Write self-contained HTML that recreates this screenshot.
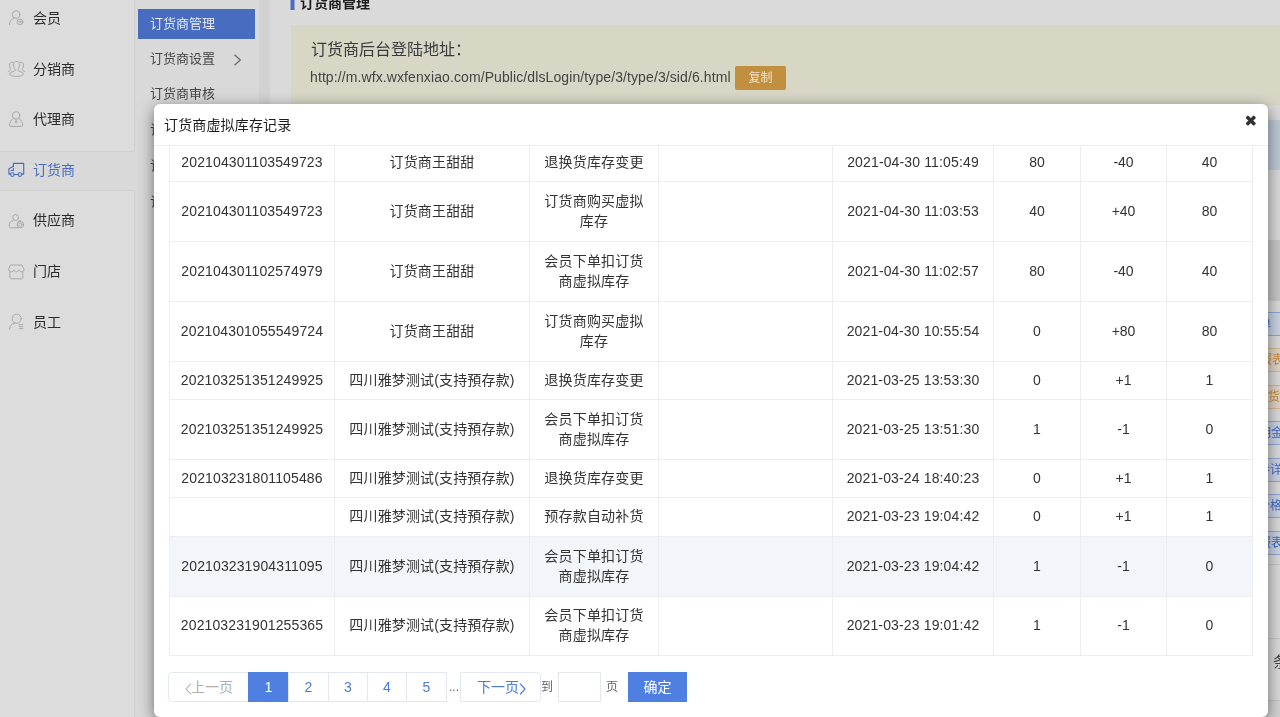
<!DOCTYPE html>
<html lang="zh-CN">
<head>
<meta charset="utf-8">
<title>订货商管理</title>
<style>
*{box-sizing:border-box;margin:0;padding:0}
html,body{width:1280px;height:717px;overflow:hidden}
body{position:relative;opacity:.999;background:#d9d9d9;font-family:"Liberation Sans","Noto Sans CJK SC",sans-serif;font-size:14px;color:#333}
.abs{position:absolute}
/* ---------- left sidebar ---------- */
#side1{left:0;top:0;width:134px;height:717px;background:#d9d9d9}
#side1 .blk{position:absolute;left:0;width:135px;background:#dcdcdc;border-right:1px solid #cfcfcf}
#side1 .b1{top:0;height:152px;border-bottom:1px solid #cfcfcf}
#side1 .b2{top:190px;height:527px;border-top:1px solid #cfcfcf}
#side1 .it{position:absolute;left:33px;font-size:14px;line-height:20px;color:#2b2b2b;white-space:nowrap}
#side1 .it.on{color:#476cc0}
#side1 svg{position:absolute;left:6px;overflow:visible}
/* ---------- second sidebar ---------- */
#side2{left:135px;top:0;width:124px;height:717px;background:#d9d9d9}
#side2 .act{position:absolute;left:3px;top:9px;width:117px;height:30px;background:#476cc0;color:#e6e9f2;font-size:13px;line-height:30px;padding-left:12px}
#side2 .s{position:absolute;left:15px;font-size:13px;line-height:20px;color:#444;white-space:nowrap}
#gut{left:259px;top:0;width:11px;height:717px;background:#d2d2d2}
/* ---------- main ---------- */
#main{left:270px;top:0;width:1010px;height:717px;background:#dadada}
#hbar{left:290px;top:0;width:4.300px;height:9.700px;background:#476cc0;transform:translateX(.5px)}
#htxt{left:300px;top:-7px;font-size:14px;font-weight:bold;line-height:20px;color:#1e1e1e;white-space:nowrap}
#tip{left:291px;top:25px;width:989px;height:90px;background:#d8d6c5}
#tip .t1{position:absolute;left:20px;top:13px;font-size:16px;line-height:24px;color:#3a3a3a;white-space:nowrap}
#tip .t2{position:absolute;left:19px;top:42px;font-size:14px;line-height:20px;color:#444;white-space:nowrap;letter-spacing:.1px}
#tip .cp{position:absolute;left:444px;top:41px;width:51px;height:24px;background:#c28f3f;color:#efe4cf;font-size:12px;line-height:24px;text-align:center;border-radius:2px}
/* ---------- right strip ---------- */
.rb{position:absolute;left:-2px;width:60px;height:24px;line-height:22px;font-size:12px;text-align:left;white-space:nowrap;overflow:hidden;border:1px solid}
.rb.bl{color:#3f67c6;border-color:#8fa6d6;background:#c9d2e3}
.rb.or{color:#c98a3a;border-color:#d6b78f;background:#dcd3c5}
/* ---------- modal ---------- */
#modal{left:154px;top:104px;width:1114px;height:613px;background:#fff;border-radius:6px;box-shadow:0 4px 15px rgba(0,0,0,.5)}
#mtitle{left:10px;top:0;height:41px;line-height:42px;font-size:14px;color:#1c1c1c;white-space:nowrap;letter-spacing:.15px}
#mline{left:0;top:41px;width:1114px;height:1px;background:#ecedf0}
#mclose{left:1091px;top:11px;width:12px;height:12px;overflow:visible}
#tbwrap{left:15px;top:42px;width:1084px;height:512px;overflow:hidden}
table{border-collapse:separate;border-spacing:0;table-layout:fixed;width:1084px;border-left:1px solid #ecedf0;margin-top:-2px}
td{border-right:1px solid #ecedf0;border-bottom:1px solid #ecedf0;text-align:center;vertical-align:middle;font-size:14px;line-height:20px;color:#333;padding:0 0 2px}
td:nth-child(1){letter-spacing:.12px}
td:nth-child(2){letter-spacing:.15px}
td:nth-child(3){letter-spacing:.2px}
td:nth-child(5){letter-spacing:.14px}
tr.h38 td{height:38px}
tr.h60 td{height:60px}
tr.h39 td{height:39px}
tr.h59 td{height:59px}
tr.hl td{background:#f2f6fb}
/* ---------- pagination ---------- */
.pg{position:absolute;top:568px;height:30px;line-height:28px;font-size:14px;text-align:center;border:1px solid #e3e7f0;color:#4a7ad8;background:#fff;white-space:nowrap}
</style>
</head>
<body>

<div id="main" class="abs"></div>
<div id="gut" class="abs"></div>

<div id="side1" class="abs">
  <div class="blk b1"></div>
  <div class="blk b2"></div>

  <svg id="ic" class="abs" style="left:0;top:0" width="134" height="340" viewBox="0 0 134 340" fill="none" stroke="#a3a3a3" stroke-width="0.9" stroke-linecap="round" stroke-linejoin="round">
    <!-- member -->
    <circle cx="16.05" cy="14.6" r="3.75"/>
    <path d="M9.4 24.6C9.6 21.4 11.2 19.2 13.8 18.2"/>
    <circle cx="20" cy="21.9" r="2.85"/>
    <circle cx="20" cy="21.9" r="1" stroke-width="0.7"/>
    <!-- distributor -->
    <path d="M16.5 61.400c1.900 0 3 1.500 3 3.300 0 2-1 3.600-1.500 4.700-.3.900.1 1.500 1 1.900 2.500.6 4.200 1.400 4.200 2.700 0 1.500-3 2.400-6.700 2.400s-6.700-.9-6.700-2.400c0-1.300 1.700-2.100 4.200-2.700.9-.4 1.300-1 1-1.900-.5-1.100-1.500-2.700-1.500-4.700 0-1.800 1.100-3.300 3-3.300"/>
    <path d="M12.900 62.300c-2.200-.6-3.700.9-3.500 3 .1 1.500.7 2.600 1.100 3.600.3.900-.1 1.500-.9 1.800-.7.300-1.200.6-1.600 1"/>
    <path d="M20.100 62.300c2.200-.6 3.700.9 3.500 3-.1 1.500-.7 2.600-1.100 3.600-.3.900.1 1.500.9 1.800.7.300 1.200.6 1.600 1"/>
    <!-- agent -->
    <circle cx="16.1" cy="115.4" r="3.7"/>
    <path d="M13.300 118.300C11 120 9.700 122.500 9.500 125c0 .9.500 1.400 1.300 1.400h10.600c.8 0 1.300-.5 1.300-1.400-.2-2.500-1.500-5-3.800-6.700"/>
    <path d="M16.100 119.600l.7 2.800-.7 1.100-.7-1.100z" stroke-width="0.7"/>
    <!-- truck -->
    <g stroke="#476cc0" stroke-width="1.15">
      <path d="M13.400 166.400V163.400H23.700V174.100H21.900"/>
      <path d="M13.400 166.300L8.900 168.700V174.100H10.400"/>
      <path d="M13.400 168.300V170.500H11.100"/>
      <circle cx="12.300" cy="174.600" r="1.850"/>
      <circle cx="19.900" cy="174.600" r="1.850"/>
      <path d="M14.200 174.500H18"/>
    </g>
    <!-- supplier -->
    <circle cx="15.650" cy="217.500" r="2.950"/>
    <path d="M18.400 221H20.800M12.900 221c-2.200 0-3.600 1.500-3.600 3.500v1.500c0 1.100.8 1.800 1.900 1.800h7.100"/>
    <circle cx="20.400" cy="224.600" r="3.250"/>
    <circle cx="20.400" cy="224.600" r="1.700" stroke-width="0.7"/>
    <!-- store -->
    <path d="M10.800 265H21.900L24 269.600c0 1.300-1.100 2.200-2.500 2.200s-2.400-.9-2.600-2c-.2 1.100-1.200 2-2.500 2s-2.400-.9-2.600-2c-.2 1.100-1.200 2-2.600 2s-2.500-.9-2.500-2.200z"/>
    <path d="M9.900 271.800V277.500c0 .8.500 1.300 1.300 1.300h10.300c.8 0 1.300-.5 1.300-1.300V271.800"/>
    <!-- staff -->
    <circle cx="16.700" cy="318.700" r="4.550"/>
    <path d="M9.600 329C9.800 325.900 11.600 323.800 14.900 323.200"/>
    <path d="M19.100 324.600H22.900M19.100 326.600H22.900M19.100 328.600H22.900"/>
  </svg>
  <div class="it" style="top:8px">会员</div>
  <div class="it" style="top:59px">分销商</div>
  <div class="it" style="top:109px">代理商</div>
  <div class="it on" style="top:160px">订货商</div>
  <div class="it" style="top:210px">供应商</div>
  <div class="it" style="top:261px">门店</div>
  <div class="it" style="top:312px">员工</div>
</div>

<div id="side2" class="abs">
  <div class="act">订货商管理</div>
  <div class="s" style="top:49px">订货商设置</div>
  <div class="s" style="top:84px">订货商审核</div>
  <div class="s" style="top:120px">订货商等级</div>
  <div class="s" style="top:156px">订货商订单</div>
  <div class="s" style="top:192px">订货商库存</div>
  <svg class="abs" style="left:98px;top:53px" width="10" height="14" viewBox="0 0 10 14" fill="none" stroke="#666" stroke-width="1.2"><path d="M1.500 1.800L7.300 7L1.500 12.200"/></svg>
</div>

<div id="hbar" class="abs"></div>
<div id="htxt" class="abs">订货商管理</div>
<div id="tip" class="abs">
  <div class="t1">订货商后台登陆地址：</div>
  <div class="t2">http://m.wfx.wxfenxiao.com/Public/dlsLogin/type/3/type/3/sid/6.html</div>
  <div class="cp">复制</div>
</div>


<div id="rs" class="abs" style="left:1256px;top:0;width:24px;height:717px;overflow:hidden">
  <div class="abs" style="left:0;top:105px;width:24px;height:15px;background:#d9d9d9"></div>
  <div class="abs" style="left:0;top:120px;width:24px;height:50px;background:#bdc9d4"></div>
  <div class="abs" style="left:0;top:170px;width:24px;height:70px;background:#d9d9d9"></div>
  <div class="abs" style="left:0;top:240px;width:24px;height:61px;background:#c6c6c6"></div>
  <div class="abs" style="left:0;top:301px;width:24px;height:416px;background:#d9d9d9"></div>
  <div class="rb bl" style="top:312px;padding-left:4px">单</div>
  <div class="rb or" style="top:348px;padding-left:5px">报表</div>
  <div class="rb or" style="top:385px;padding-left:1px">订货商</div>
  <div class="rb bl" style="top:421px;padding-left:4px">佣金</div>
  <div class="rb bl" style="top:458px;padding-left:3px">参详</div>
  <div class="rb bl" style="top:494px;padding-left:3px">价格</div>
  <div class="rb bl" style="top:531px;padding-left:4px">报表</div>
  <div class="abs" style="left:0;top:564px;width:24px;height:1px;background:#c4c4c4"></div>
  <div class="abs" style="left:0;top:638px;width:24px;height:1px;background:#c4c4c4"></div>
  <div class="abs" style="left:0;top:700px;width:24px;height:17px;background:#d2d2d2;border-top:1px solid #c4c4c4"></div>
  <div class="abs" style="left:17px;top:651px;font-size:15px;line-height:22px;color:#444">条</div>
</div>

<div id="modal" class="abs">
  <div id="mtitle" class="abs">订货商虚拟库存记录</div>
  <div id="mline" class="abs"></div>
  <svg id="mclose" class="abs" viewBox="0 0 12 12"><g transform="translate(5.800 5.600) rotate(45)" fill="#333"><rect x="-5.800" y="-1.750" width="11.600" height="3.500" rx="1"/><rect x="-1.750" y="-5.800" width="3.500" height="11.600" rx="1"/></g></svg>
  <div id="tbwrap" class="abs">
  <table>
    <colgroup><col style="width:165px"><col style="width:195px"><col style="width:129px"><col style="width:174px"><col style="width:161px"><col style="width:87px"><col style="width:86px"><col style="width:86px"></colgroup>
    <tr class="h38"><td>202104301103549723</td><td>订货商王甜甜</td><td>退换货库存变更</td><td></td><td>2021-04-30 11:05:49</td><td>80</td><td>-40</td><td>40</td></tr>
    <tr class="h60"><td>202104301103549723</td><td>订货商王甜甜</td><td>订货商购买虚拟<br>库存</td><td></td><td>2021-04-30 11:03:53</td><td>40</td><td>+40</td><td>80</td></tr>
    <tr class="h60"><td>202104301102574979</td><td>订货商王甜甜</td><td>会员下单扣订货<br>商虚拟库存</td><td></td><td>2021-04-30 11:02:57</td><td>80</td><td>-40</td><td>40</td></tr>
    <tr class="h60"><td>202104301055549724</td><td>订货商王甜甜</td><td>订货商购买虚拟<br>库存</td><td></td><td>2021-04-30 10:55:54</td><td>0</td><td>+80</td><td>80</td></tr>
    <tr class="h38"><td>202103251351249925</td><td>四川雅梦测试(支持預存款)</td><td>退换货库存变更</td><td></td><td>2021-03-25 13:53:30</td><td>0</td><td>+1</td><td>1</td></tr>
    <tr class="h60"><td>202103251351249925</td><td>四川雅梦测试(支持預存款)</td><td>会员下单扣订货<br>商虚拟库存</td><td></td><td>2021-03-25 13:51:30</td><td>1</td><td>-1</td><td>0</td></tr>
    <tr class="h38"><td>202103231801105486</td><td>四川雅梦测试(支持預存款)</td><td>退换货库存变更</td><td></td><td>2021-03-24 18:40:23</td><td>0</td><td>+1</td><td>1</td></tr>
    <tr class="h39"><td></td><td>四川雅梦测试(支持預存款)</td><td>预存款自动补货</td><td></td><td>2021-03-23 19:04:42</td><td>0</td><td>+1</td><td>1</td></tr>
    <tr class="h60 hl"><td>202103231904311095</td><td>四川雅梦测试(支持預存款)</td><td>会员下单扣订货<br>商虚拟库存</td><td></td><td>2021-03-23 19:04:42</td><td>1</td><td>-1</td><td>0</td></tr>
    <tr class="h59"><td>202103231901255365</td><td>四川雅梦测试(支持預存款)</td><td>会员下单扣订货<br>商虚拟库存</td><td></td><td>2021-03-23 19:01:42</td><td>1</td><td>-1</td><td>0</td></tr>
  </table>
  </div>

  <div class="pg" style="left:14px;width:81px;border-radius:4px 0 0 4px;color:#b0b0b0;text-align:left;padding-left:22px"><svg class="abs" style="left:15.500px;top:9.500px" width="7" height="12" viewBox="0 0 7 12" fill="none" stroke="#b8b8b8" stroke-width="1.1"><path d="M6 .7L1 6L6 11.300"/></svg>上一页</div>
  <div class="pg" style="left:94px;width:41px;background:#4f7fe0;border-color:#4f7fe0;color:#fff">1</div>
  <div class="pg" style="left:134px;width:41px">2</div>
  <div class="pg" style="left:174px;width:40px">3</div>
  <div class="pg" style="left:213px;width:40px">4</div>
  <div class="pg" style="left:252px;width:41px">5</div>
  <div class="abs" style="left:295px;top:568px;line-height:30px;font-size:12px;color:#666">...</div>
  <div class="pg" style="left:306px;width:81px;border-radius:0 4px 4px 0;text-align:left;padding-left:16px">下一页<svg class="abs" style="left:57.500px;top:9.500px" width="7" height="12" viewBox="0 0 7 12" fill="none" stroke="#4a7ad8" stroke-width="1.2"><path d="M1 .7L6 6L1 11.300"/></svg></div>
  <div class="abs" style="left:387px;top:568px;line-height:30px;font-size:12px;color:#666">到</div>
  <div class="pg" style="left:404px;width:43px;border-color:#e4e7f0"></div>
  <div class="abs" style="left:452px;top:568px;line-height:30px;font-size:12px;color:#666">页</div>
  <div class="abs" style="left:474px;top:568px;width:59px;height:30px;line-height:30px;background:#4f7fe0;color:#fff;font-size:14px;text-align:center">确定</div>
</div>

</body>
</html>
